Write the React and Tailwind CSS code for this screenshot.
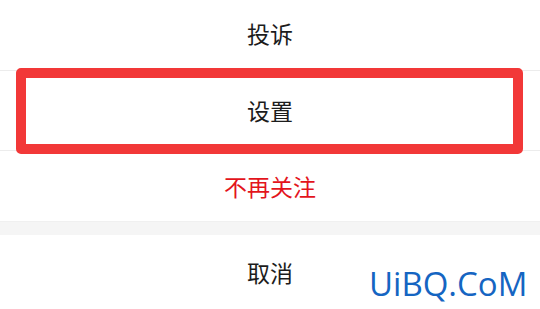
import React from "react";

const cjk = { fontFamily: '"Noto Sans CJK SC", "Noto Sans", sans-serif' };

export default function App() {
  return (
    <div className="relative w-[540px] h-[309px] bg-white overflow-hidden" style={cjk}>
      <div className="flex flex-col">
        <div className="h-[70px] flex items-center justify-center pb-[4px] text-[23px] text-[#1c1c1c]">投诉</div>
        <div className="h-px bg-[#ececec]" />
        <div className="relative h-[79px] flex items-center justify-center text-[23px] text-[#1c1c1c]">
          设置
          <div className="absolute left-[16px] right-[17px] top-[-3px] bottom-[-4px] border-[10px] border-[#f23838] rounded-[5px]" />
        </div>
        <div className="h-px bg-[#ececec]" />
        <div className="h-[70px] flex items-center justify-center text-[23px] text-[#e3141c]">不再关注</div>
        <div className="h-px bg-[#f0f0f0]" />
        <div className="h-[13px] bg-[#f5f5f5]" />
        <div className="h-[74px] flex items-center justify-center text-[23px] text-[#1c1c1c]">取消</div>
      </div>
      <div
        className="absolute left-[369px] top-[267px] text-[33px] leading-none text-[#1565c2] bg-white"
        style={{ fontFamily: '"Open Sans", sans-serif' }}
      >
        UiBQ.CoM
      </div>
    </div>
  );
}
